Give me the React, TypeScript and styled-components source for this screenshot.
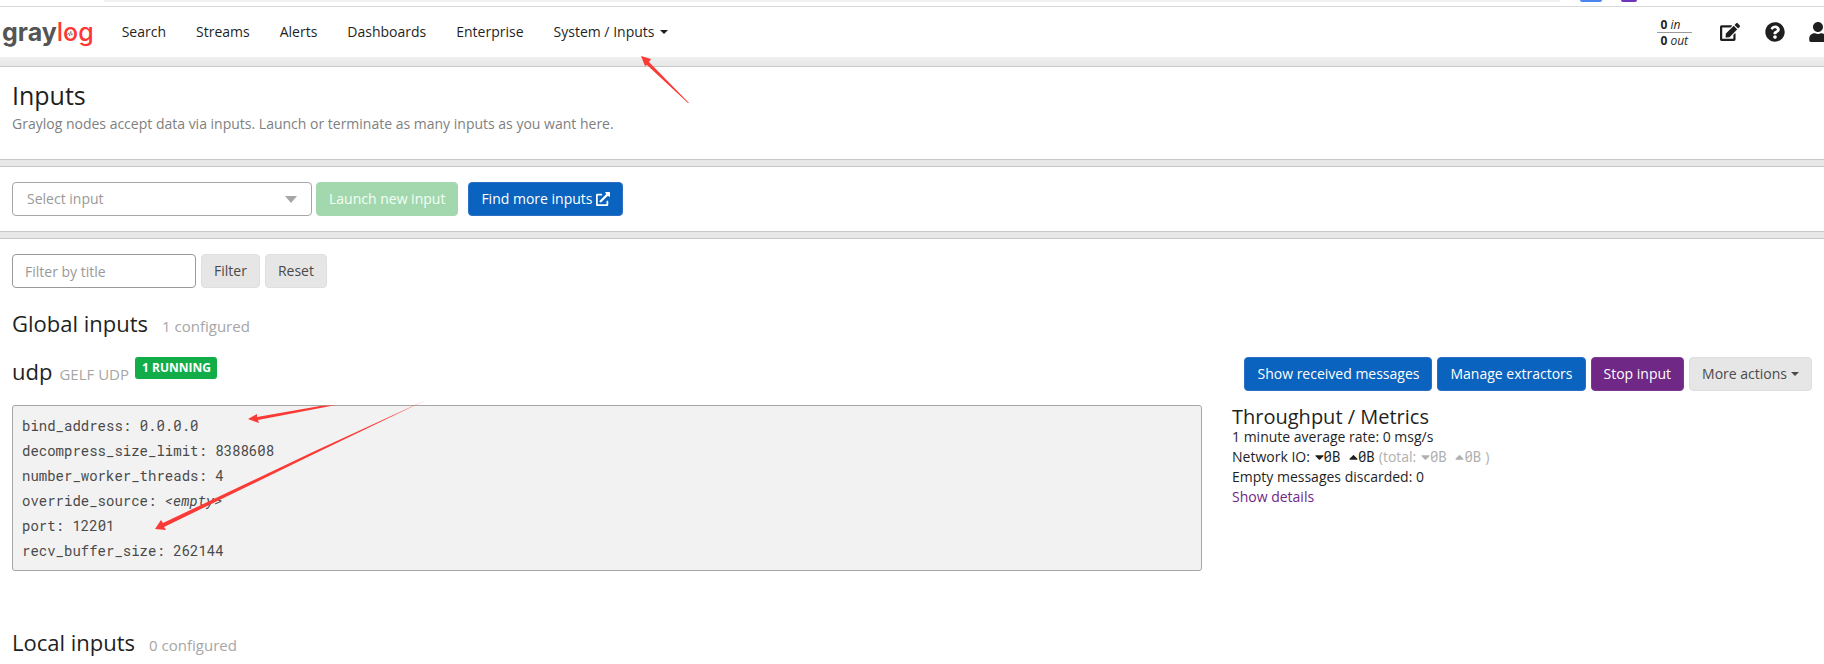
import React from "react";
import styled, { createGlobalStyle, css } from "styled-components";
import { FaEdit, FaQuestionCircle, FaUser, FaExternalLinkAlt, FaCaretDown, FaCaretUp } from "react-icons/fa";

const GlobalStyle = createGlobalStyle`
  *, *::before, *::after { box-sizing: border-box; }
  body {
    margin: 0;
    background: #fff;
    color: #1f1f1f;
    font: 14px/20px "Open Sans", "Noto Sans", sans-serif;
    overflow-x: hidden;
  }
  button, input, select { font: inherit; }
`;

const BrowserEdge = styled.div`
  display: flex;
  height: 7px;
  padding-left: 104px;
  border-bottom: 1px solid #d9d9d9;
`;

const AddressBar = styled.div`
  width: 1456px;
  height: 2px;
  margin-right: 20px;
  background: #f1f1f1;
`;

const Extension = styled.div<{ $color: string; $width: number }>`
  width: ${(p) => p.$width}px;
  height: 2px;
  margin-right: 19px;
  border-radius: 0 0 2px 2px;
  background: ${(p) => p.$color};
`;

const Header = styled.header`
  display: flex;
  align-items: center;
  height: 50px;
  padding-left: 2px;
`;

const Logo = styled.a`
  position: relative;
  margin-right: 13px;
  color: #555;
  font: 700 25px/30px Inter, sans-serif;
  text-decoration: none;
`;

const LogoRed = styled.span`
  color: #ff3633;
  font-weight: 500;
`;

const LogoPulse = styled.svg`
  position: absolute;
  left: 64px;
  top: 13px;
`;

const Nav = styled.nav`
  display: flex;
  flex: 1;
`;

const NavLink = styled.a`
  position: relative;
  display: flex;
  align-items: center;
  gap: 6px;
  padding: 15px;
  color: #1f1f1f;
  text-decoration: none;
`;

const Caret = styled.span`
  display: inline-block;
  border: 4px solid transparent;
  border-top-color: currentColor;
  border-bottom: 0;
`;

const Throughput = styled.div`
  margin-right: 28px;
  font-size: 12px;
  line-height: 15px;
  div {
    padding: 0 4px 0 3px;
  }
  div + div {
    border-top: 1px solid #9b9b9b;
  }
`;

const IconLink = styled.a`
  display: flex;
  flex: none;
  margin-right: 25px;
  color: #1f1f1f;
  font-size: 20px;
  &:last-child {
    margin-right: -4px;
  }
  &:nth-last-child(2) {
    margin-right: 23px;
  }
`;

const Main = styled.main`
  padding-top: 9px;
  background: linear-gradient(#efefef, #e7e7e7 9px);
`;

const Section = styled.section<{ $last?: boolean }>`
  padding: 15px 12px;
  border-top: 1px solid #c8c8c8;
  ${(p) =>
    !p.$last &&
    css`
      border-bottom: 1px solid #c8c8c8;
      margin-bottom: 6px;
    `}
  background: #fff;
`;

const Title = styled.h1`
  margin: 0;
  font-size: 25px;
  font-weight: 400;
  line-height: 26px;
`;

const Lead = styled.p`
  margin: 6px 0 10px;
  color: #7f7f7f;
`;

const SelectWrap = styled.div`
  position: relative;
  width: 300px;
  margin-right: 4px;
`;

const Select = styled.select`
  appearance: none;
  display: block;
  width: 100%;
  height: 34px;
  padding: 0 14px;
  border: 1px solid #a6a6a6;
  border-radius: 4px;
  background: #fff;
  color: #999;
`;

const SelectArrow = styled.span`
  position: absolute;
  right: 15px;
  top: 14px;
  border: 6px solid transparent;
  border-top: 7px solid #a6a6a6;
  border-bottom: 0;
  pointer-events: none;
`;

const tones = {
  green: ["#a3d8af", "#a3d8af", "#f4fff6"],
  blue: ["#0a63be", "#2a6fc4", "#fff"],
  purple: ["#6f2885", "#7b3a90", "#fff"],
  gray: ["#e6e6e6", "#dfdfdf", "#4a4a4a"],
};

const Button = styled.button<{ $tone: keyof typeof tones }>`
  display: inline-flex;
  align-items: center;
  gap: 4px;
  height: 34px;
  padding: 0 12px;
  border: 1px solid ${(p) => tones[p.$tone][1]};
  border-radius: 4px;
  background: ${(p) => tones[p.$tone][0]};
  color: ${(p) => tones[p.$tone][2]};
  text-decoration: none;
  white-space: nowrap;
`;

const LaunchRow = styled.div`
  display: flex;
  align-items: center;
  a {
    margin-left: 10px;
  }
`;

const FilterForm = styled.form`
  display: flex;
  gap: 5px;
  margin-bottom: 20px;
`;

const FilterInput = styled.input`
  width: 184px;
  height: 34px;
  padding: 0 12px;
  border: 1px solid #999;
  border-radius: 4px;
  background: #fff;
  &::placeholder {
    color: #999;
    opacity: 1;
  }
`;

const Heading = styled.h2`
  margin: 0;
  font-size: 22px;
  font-weight: 400;
  line-height: 30px;
  small {
    margin-left: 14px;
    color: #a6a6a6;
    font-size: 15px;
  }
`;

const InputHead = styled.div`
  display: flex;
  justify-content: space-between;
  align-items: flex-start;
  margin: 16px 0 14px;
`;

const InputName = styled(Heading)`
  display: flex;
  align-items: baseline;
  line-height: 28px;
  small {
    margin-left: 7px;
  }
`;

const Badge = styled.span`
  align-self: flex-start;
  margin-left: 6px;
  padding: 0 6px 0 7px;
  border-radius: 3px;
  background: #12ad48;
  color: #fff;
  font-size: 12px;
  font-weight: 700;
  line-height: 22px;
`;

const Actions = styled.div`
  display: flex;
  gap: 5px;
`;

const InputBody = styled.div`
  display: grid;
  grid-template-columns: minmax(0, 2fr) minmax(0, 1fr);
  margin: 0 -15px;
`;

const Config = styled.ul`
  position: relative;
  margin: 0 15px;
  padding: 7px 9px;
  border: 1px solid #a6a6a6;
  border-radius: 3px;
  background: #f2f2f2;
  color: #4a4a4a;
  font-family: "Roboto Mono", "Liberation Mono", monospace;
  line-height: 25px;
  list-style: none;
`;

const Metrics = styled.div`
  margin: 2px 15px 0;
  h3 {
    margin: 0;
    font-size: 20px;
    font-weight: 400;
    line-height: 20px;
  }
  a {
    color: #6f2885;
    text-decoration: none;
  }
`;

const Io = styled.span<{ $muted?: boolean }>`
  color: ${(p) => (p.$muted ? "#b0b0b0" : "inherit")};
`;

const Bytes = styled.span`
  margin-right: 4px;
  font-family: "Roboto Mono", "Liberation Mono", monospace;
  svg {
    width: 9px;
    height: 14px;
    margin-left: 1px;
    vertical-align: -2px;
  }
`;

const Local = styled.div`
  padding-top: 56px;
`;

const Pointer = styled.svg<{ $left: number; $top: number }>`
  position: absolute;
  left: ${(p) => p.$left}px;
  top: ${(p) => p.$top}px;
  z-index: 2;
  fill: #fb3a36;
  pointer-events: none;
`;

const navItems = ["Search", "Streams", "Alerts", "Dashboards", "Enterprise"];

const settings: [string, React.ReactNode][] = [
  ["bind_address", "0.0.0.0"],
  ["decompress_size_limit", "8388608"],
  ["number_worker_threads", "4"],
  ["override_source", <i key="e">{"<empty>"}</i>],
  ["port", "12201"],
  ["recv_buffer_size", "262144"],
];

const Traffic = () => (
  <>
    <Bytes><FaCaretDown />0B</Bytes> <Bytes><FaCaretUp />0B</Bytes>
  </>
);

export default function App() {
  return (
    <>
      <GlobalStyle />
      <BrowserEdge>
        <AddressBar />
        <Extension $color="#4a86ee" $width={22} />
        <Extension $color="#6f35b8" $width={16} />
      </BrowserEdge>
      <Header>
        <Logo href="#">
          gray<LogoRed>log</LogoRed>
          <LogoPulse width="8" height="8" viewBox="0 0 10 9" fill="none" stroke="#777" strokeWidth="0.9">
            <path d="M1 5h1.500l1-2 1 4 1.500-6 1 5 .6-1.500h1.400" />
          </LogoPulse>
        </Logo>
        <Nav>
          {navItems.map((label) => (
            <NavLink href="#" key={label}>{label}</NavLink>
          ))}
          <NavLink href="#">
            System / Inputs <Caret />
            <Pointer $left={102} $top={49} width="49" height="48" viewBox="0 0 49 48">
              <path d="M0 0 10 3 8 6 48 47 47 47 6 9 4 10Z" />
            </Pointer>
          </NavLink>
        </Nav>
        <Throughput>
          <div><b>0</b> <i>in</i></div>
          <div><b>0</b> <i>out</i></div>
        </Throughput>
        <IconLink href="#" aria-label="Scratchpad"><FaEdit /></IconLink>
        <IconLink href="#" aria-label="Help"><FaQuestionCircle /></IconLink>
        <IconLink href="#" aria-label="User"><FaUser /></IconLink>
      </Header>
      <Main>
        <Section>
          <Title>Inputs</Title>
          <Lead>Graylog nodes accept data via inputs. Launch or terminate as many inputs as you want here.</Lead>
        </Section>
        <Section>
          <LaunchRow>
            <SelectWrap>
              <Select aria-label="Select input" defaultValue="">
                <option value="">Select input</option>
              </Select>
              <SelectArrow />
            </SelectWrap>
            <Button $tone="green" type="button" disabled>Launch new input</Button>
            <Button $tone="blue" as="a" href="#">Find more inputs <FaExternalLinkAlt /></Button>
          </LaunchRow>
        </Section>
        <Section $last>
          <FilterForm>
            <FilterInput aria-label="Filter by title" placeholder="Filter by title" />
            <Button $tone="gray" type="submit">Filter</Button>
            <Button $tone="gray" type="reset">Reset</Button>
          </FilterForm>
          <Heading>Global inputs<small>1 configured</small></Heading>
          <InputHead>
            <InputName>udp<small>GELF UDP</small><Badge>1 RUNNING</Badge></InputName>
            <Actions>
              <Button $tone="blue" as="a" href="#">Show received messages</Button>
              <Button $tone="blue" as="a" href="#">Manage extractors</Button>
              <Button $tone="purple" type="button">Stop input</Button>
              <Button $tone="gray" type="button">More actions <Caret /></Button>
            </Actions>
          </InputHead>
          <InputBody>
            <Config>
              {settings.map(([name, value]) => (
                <li key={name}>{name}: {value}</li>
              ))}
              <Pointer $left={235} $top={-1} width="88" height="20" viewBox="0 0 88 20">
                <path d="M0 14 9 9 9 12 72 1 88 0 10 15 11 18Z" />
              </Pointer>
              <Pointer $left={142} $top={-6} width="272" height="130" viewBox="0 0 272 130">
                <path d="M0 129 6 120 8 123 160 51 271 0 161 53 9 127 11 130Z" />
              </Pointer>
            </Config>
            <Metrics>
              <h3>Throughput / Metrics</h3>
              <div>1 minute average rate: 0 msg/s</div>
              <div>
                Network IO: <Io><Traffic /></Io><Io $muted>(total: <Traffic />)</Io>
              </div>
              <div>Empty messages discarded: 0</div>
              <a href="#">Show details</a>
            </Metrics>
          </InputBody>
          <Local>
            <Heading>Local inputs<small>0 configured</small></Heading>
          </Local>
        </Section>
      </Main>
    </>
  );
}
